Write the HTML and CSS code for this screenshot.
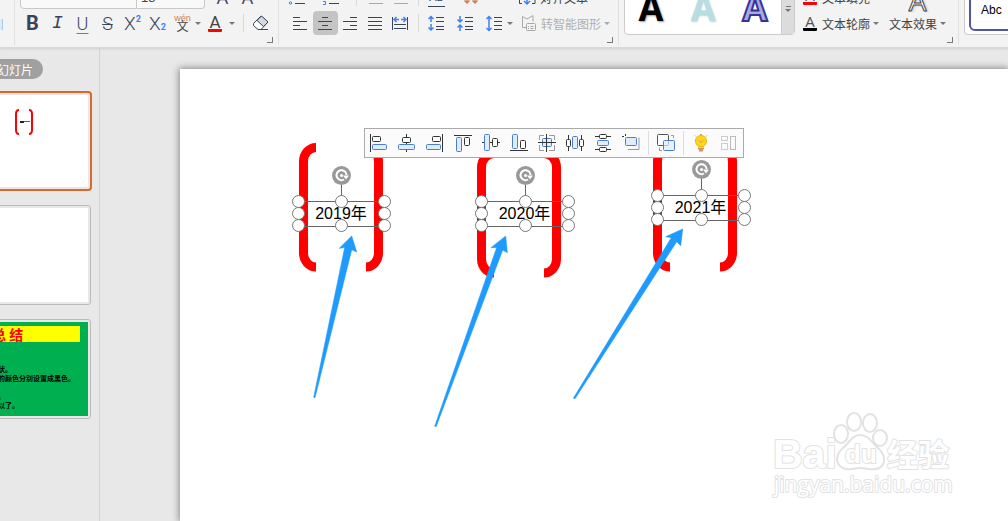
FILE: index.html
```
<!DOCTYPE html>
<html lang="zh-CN">
<head>
    <meta charset="UTF-8">
    <meta name="viewport" content="width=device-width, initial-scale=1.0">
    <title>演示文稿</title>
    <link rel="stylesheet" href="styles.css">
</head>
<body>
    <header class="ribbon">
        <div class="group clip-group"><span class="clip-edge"></span></div>

        <!-- Font -->
        <div class="group font-group">
            <div class="row">
                <select class="font-name" aria-label="字体"><option></option></select>
                <select class="font-size" aria-label="字号"><option>18</option></select>
                <button class="tool grow" aria-label="增大字号">A</button>
                <button class="tool grow" aria-label="减小字号">A</button>
            </div>
            <div class="row">
                <button class="tool bold">B</button>
                <button class="tool italic">I</button>
                <button class="tool underline">U</button>
                <button class="tool strike">S</button>
                <button class="tool script">X<sup>2</sup></button>
                <button class="tool script">X<sub>2</sub></button>
                <button class="tool pinyin"><span class="wen">wén</span><span class="zi">文</span></button>
                <button class="caret" aria-label="拼音选项"></button>
                <button class="tool color">A</button>
                <button class="caret" aria-label="字体颜色"></button>
                <span class="sep wide"></span>
                <button class="tool" aria-label="清除格式">
                    <svg width="20" height="20" fill="none" stroke="#39435c"><path d="M1.500 10.500 9 3l7 6-7 7.500H6L1.500 12.500z" fill="#fff"/><path d="M5 7.500 9.500 3l6.500 6-4.500 4.500z" fill="#d5d9e2"/><path d="M6 16.500h10"/></svg>
                </button>
            </div>
            <button class="launcher" aria-label="字体设置"></button>
        </div>

        <!-- Paragraph -->
        <div class="group para-group">
            <div class="row">
                <button class="tool list" aria-label="项目符号">
                    <svg width="20" height="20" fill="none" stroke="#39435c"><path d="M7 4.500h10M7 10.500h10M7 16.500h10"/><g stroke="#4080f0"><circle cx="2.500" cy="10" r="1.200"/><circle cx="2.500" cy="16" r="1.200"/></g></svg>
                </button>
                <button class="tool list" aria-label="编号">
                    <svg width="20" height="20" fill="none" stroke="#39435c"><path d="M7 4.500h10M7 10.500h10M7 16.500h10"/><path d="M1 14.500h2.500v3H1" stroke="#4080f0"/></svg>
                </button>
                <span class="sep"></span>
                <button class="tool" aria-label="减少缩进">
                    <svg width="20" height="20" stroke="#aaa"><path d="M3 4.500h14M3 10.500h14M3 16.500h14"/></svg>
                </button>
                <button class="tool" aria-label="增加缩进">
                    <svg width="20" height="20" stroke="#aaa"><path d="M3 4.500h14M3 10.500h14M3 16.500h14"/></svg>
                </button>
                <span class="sep mid"></span>
                <button class="tool ab">AB</button>
                <button class="tool direction" aria-label="文字方向">
                    <svg width="20" height="20" fill="none" stroke="#d08050" stroke-width="1.500"><path d="M6 2v14M3.500 13.500 6 16l2.500-2.500M14 2v14M11.500 13.500 14 16l2.500-2.500"/></svg>
                </button>
                <button class="text-tool align-text">
                    <svg width="20" height="20" fill="none" stroke="#39435c"><path d="M5 3.500H2.500v13H5M15 3.500h3v13H15"/><path d="M10 4v13M7 14l3 3 3-3" stroke="#4080f0" stroke-width="1.500"/></svg>
                    对齐文本
                </button>
            </div>
            <div class="row">
                <button class="tool" aria-label="左对齐">
                    <svg width="20" height="20" stroke="#39435c"><path d="M2 4.500h7M2 8.500h14M2 12.500h7M2 16.500h14"/></svg>
                </button>
                <button class="tool active" aria-label="居中">
                    <svg width="20" height="20" stroke="#39435c"><path d="M6 4.500h6M2 8.500h14M6 12.500h6M2 16.500h14"/></svg>
                </button>
                <button class="tool" aria-label="右对齐">
                    <svg width="20" height="20" stroke="#39435c"><path d="M9 4.500h7M2 8.500h14M9 12.500h7M2 16.500h14"/></svg>
                </button>
                <button class="tool" aria-label="两端对齐">
                    <svg width="20" height="20" stroke="#39435c"><path d="M2 4.500h14M2 8.500h14M2 12.500h14M2 16.500h14"/></svg>
                </button>
                <button class="tool" aria-label="分散对齐">
                    <svg width="20" height="20" fill="none" stroke="#39435c"><path d="M1.500 4v13M16.500 4v13M3 11.500h12M3 15.500h12"/><path d="M3 6.500h5M10 6.500h5M5.500 4 3 6.500 5.500 9M12.500 4 15 6.500 12.500 9" stroke="#4080f0" stroke-width="1.500"/></svg>
                </button>
                <span class="sep mid"></span>
                <div class="spacing">
                    <button class="tool" aria-label="增大段距">
                        <svg width="20" height="20" fill="none" stroke="#39435c"><path d="M9 4.500h8M9 8.500h8M9 13.500h8M9 16.500h8"/><path d="M4 9V3M1.500 6 4 3.500 6.500 6M4 11v6M1.500 14.500 4 17l2.500-2.500" stroke="#4080f0" stroke-width="1.500"/></svg>
                    </button>
                    <button class="tool" aria-label="减小段距">
                        <svg width="20" height="20" fill="none" stroke="#39435c"><path d="M9 4.500h8M9 8.500h8M9 13.500h8M9 16.500h8"/><path d="M4 3v6M1.500 6.500 4 9l2.500-2.500M4 18v-6M1.500 14.500 4 12l2.500 2.500" stroke="#4080f0" stroke-width="1.500"/></svg>
                    </button>
                    <button class="tool" aria-label="行距">
                        <svg width="20" height="20" fill="none" stroke="#39435c"><path d="M9 4.500h8M9 8.500h8M9 12.500h8M9 16.500h8"/><path d="M4 4v13M1.500 6 4 3.500 6.500 6M1.500 15 4 17.500 6.500 15" stroke="#4080f0" stroke-width="1.500"/></svg>
                    </button>
                </div>
                <button class="caret" aria-label="行距选项"></button>
                <button class="text-tool smart" disabled>
                    <svg width="20" height="20" fill="none" stroke="#a8a8a8"><path d="M7 14.500H3.500v-11L8 6l6-3.500v6"/><rect x="7.500" y="10.500" width="9" height="7" rx="1" fill="#f3f3f3"/><path d="M9 13.500h1M11.500 13.500h3M9 15.500h1M11.500 15.500h3"/></svg>
                    转智能图形<span class="arrow"></span>
                </button>
            </div>
            <button class="launcher" aria-label="段落设置"></button>
        </div>

        <!-- WordArt -->
        <div class="group art-group">
            <div class="gallery">
                <button class="art art-black">A</button>
                <button class="art art-teal">A</button>
                <button class="art art-blue">A</button>
                <button class="more" aria-label="更多样式"><span class="line"></span><span class="arrow"></span></button>
            </div>
            <div class="stack">
                <button class="text-tool"><span class="glyph fill-red">A</span>文本填充</button>
                <button class="text-tool"><span class="glyph">A</span>文本轮廓<span class="arrow"></span></button>
            </div>
            <button class="effect">
                <span class="effect-glyph">A</span>
                <span class="effect-label">文本效果<span class="arrow"></span></span>
            </button>
            <button class="launcher" aria-label="文本设置"></button>
        </div>

        <div class="group style-group">
            <div class="style-gallery"><button class="shape-style">Abc</button></div>
        </div>
    </header>

    <main class="workspace">
        <aside class="sidebar">
            <button class="tag">幻灯片</button>
            <div class="thumb selected">
                <div class="page">
                    <svg class="mini" width="20" height="26" fill="none" stroke="#f00" stroke-width="2"><path d="M5 1Q2 1 2 5v16q0 4 3 4M15 1q3 0 3 4v16q0 4-3 4"/><path d="M6 13h4" stroke="#222"/><path d="M10 12.500h6" stroke="#468" stroke-width="1"/></svg>
                </div>
            </div>
            <div class="thumb"><div class="page"></div></div>
            <div class="thumb">
                <div class="page green">
                    <h2>总 结</h2>
                    <p>状。<br>的颜色分别设置成黑色。<br><br>。<br>以了。</p>
                </div>
            </div>
        </aside>

        <section class="canvas">
            <div class="slide">
                <svg class="brackets" width="828" height="452" fill="none" stroke="#f00" stroke-width="9">
                    <path d="M136 78.500A12.500 14 0 0 0 123.500 92.500V184A12.500 14 0 0 0 136 198M186 78.500A12.500 14 0 0 1 198.500 92.500V184A12.500 14 0 0 1 186 198"/>
                    <path d="M314 84.500A12.500 14 0 0 0 301.500 98.500V190A12.500 14 0 0 0 314 204M364 84.500A12.500 14 0 0 1 376.500 98.500V190A12.500 14 0 0 1 364 204"/>
                    <path d="M490 78.500A12.500 14 0 0 0 477.500 92.500V184A12.500 14 0 0 0 490 198M540 78.500A12.500 14 0 0 1 552.500 92.500V184A12.500 14 0 0 1 540 198"/>
                </svg>

                <div class="textbox box-2019">2019年<i class="rotate"><svg width="19" height="19" fill="none" stroke="#fff" stroke-width="2"><path d="M12 13.500A5 5 0 1 1 14.500 9"/><path d="M11 9.500h6l-3 4z" fill="#fff" stroke="none"/><circle cx="9.500" cy="9.500" r="1.500" fill="#fff" stroke="none"/></svg></i><i class="h nw"></i><i class="h n"></i><i class="h ne"></i><i class="h w"></i><i class="h e"></i><i class="h sw"></i><i class="h s"></i><i class="h se"></i></div>
                <div class="textbox box-2020">2020年<i class="rotate"><svg width="19" height="19" fill="none" stroke="#fff" stroke-width="2"><path d="M12 13.500A5 5 0 1 1 14.500 9"/><path d="M11 9.500h6l-3 4z" fill="#fff" stroke="none"/><circle cx="9.500" cy="9.500" r="1.500" fill="#fff" stroke="none"/></svg></i><i class="h nw"></i><i class="h n"></i><i class="h ne"></i><i class="h w"></i><i class="h e"></i><i class="h sw"></i><i class="h s"></i><i class="h se"></i></div>
                <div class="textbox box-2021">2021年<i class="rotate"><svg width="19" height="19" fill="none" stroke="#fff" stroke-width="2"><path d="M12 13.500A5 5 0 1 1 14.500 9"/><path d="M11 9.500h6l-3 4z" fill="#fff" stroke="none"/><circle cx="9.500" cy="9.500" r="1.500" fill="#fff" stroke="none"/></svg></i><i class="h nw"></i><i class="h n"></i><i class="h ne"></i><i class="h w"></i><i class="h e"></i><i class="h sw"></i><i class="h s"></i><i class="h se"></i></div>

                <svg class="arrows" width="828" height="452" viewBox="180 69 828 452" fill="#1e9bff" stroke="#1e9bff" stroke-width=".6">
                    <path d="M351.700 236 339.300 248.300 344.700 247.500 313.700 397.300 315 397.700 351.700 249.700 356.700 252z"/>
                    <path d="M505.700 236 491 247.700 496.700 247.500 434.700 426.300 436.200 426.500 502.700 250 507.300 252.700z"/>
                    <path d="M682.700 229 665.700 236.700 671.300 237.700 573.500 398 575 398.700 676.700 241.700 680.700 245.700z"/>
                </svg>

                <!-- Alignment toolbar -->
                <div class="floatbar">
                    <button aria-label="左对齐"><svg width="20" height="20"><path d="M1.500 1v18"/><rect x="3.500" y="3.500" width="8" height="5" rx="1"/><rect class="b" x="3.500" y="11.500" width="14" height="5" rx="1"/></svg></button>
                    <button aria-label="水平居中"><svg width="20" height="20"><path d="M9.500 1v18"/><rect class="w" x="5.500" y="4.500" width="8" height="5" rx="1"/><rect class="b" x="1.500" y="11.500" width="16" height="5" rx="1"/></svg></button>
                    <button aria-label="右对齐"><svg width="20" height="20"><path d="M17.500 1v18"/><rect x="7.500" y="3.500" width="8" height="5" rx="1"/><rect class="b" x="1.500" y="11.500" width="14" height="5" rx="1"/></svg></button>
                    <button aria-label="靠上对齐"><svg width="20" height="20"><path d="M1 2.500h18"/><rect class="b" x="3.500" y="4.500" width="5" height="14" rx="1"/><rect x="11.500" y="4.500" width="5" height="8" rx="1"/></svg></button>
                    <button aria-label="垂直居中"><svg width="20" height="20"><path d="M1 9.500h18"/><rect class="b" x="3.500" y="1.500" width="5" height="16" rx="1"/><rect class="w" x="11.500" y="5.500" width="5" height="8" rx="1"/></svg></button>
                    <button aria-label="靠下对齐"><svg width="20" height="20"><path d="M1 17.500h18"/><rect class="b" x="3.500" y="1.500" width="5" height="14" rx="1"/><rect x="11.500" y="7.500" width="5" height="8" rx="1"/></svg></button>
                    <button aria-label="中心对齐"><svg width="20" height="20"><path d="M2.500 7V2.500H7M12 2.500h5.500V7M2.500 12v5.500H7M12 17.500h5.500V12" stroke="#999"/><rect class="b" x="5.500" y="5.500" width="9" height="8" rx="1"/><path d="M1 9.500h18M9.500 1v18"/></svg></button>
                    <button aria-label="横向分布"><svg width="20" height="20"><path d="M3.500 2v16M16.500 2v16"/><rect class="w" x="1.500" y="6.500" width="4" height="7" rx="1"/><rect class="b" x="7.500" y="3.500" width="5" height="12" rx="1"/><rect class="w" x="14.500" y="6.500" width="4" height="7" rx="1"/></svg></button>
                    <button aria-label="纵向分布"><svg width="20" height="20"><path d="M2 3.500h16M2 16.500h16"/><rect class="w" x="6.500" y="1.500" width="7" height="4" rx="1"/><rect class="b" x="4.500" y="7.500" width="11" height="5" rx="1"/><rect class="w" x="6.500" y="14.500" width="7" height="4" rx="1"/></svg></button>
                    <button aria-label="相对对齐"><svg width="20" height="20"><path d="M4.500 1v2M1 3.500h2"/><path d="M18 4.500v12H7" stroke="#999"/><rect class="b" x="4.500" y="4.500" width="11" height="8" rx="1"/></svg></button>
                    <span class="bar-sep"></span>
                    <button aria-label="组合"><svg width="20" height="20"><rect x="1.500" y="1.500" width="11" height="11" rx="1" stroke="#555"/><rect class="b" x="7.500" y="7.500" width="11" height="10" rx="1" fill-opacity=".7"/><path d="M15 2.500h2.500V5M3.500 14.500v3H6" stroke="#999"/></svg></button>
                    <span class="bar-sep"></span>
                    <button aria-label="智能建议"><svg width="20" height="20"><path d="M7.500 13.500Q4.500 11.500 4.500 8a5.500 5.500 0 0 1 11 0q0 3.500-3 5.500z" fill="#ffd71c" stroke="#eab400"/><path d="M7 15.500h6M8 17.500h4" stroke="#d79560" stroke-width="2"/><path d="M7.500 7.500 10 9.500l2.500-2" stroke="#d79560"/><path d="M9 1.500h2M4 2.500l1 1M16 2.500l-1 1" stroke="#d79560"/></svg></button>
                    <button aria-label="更多布局" disabled><svg width="20" height="20"><g stroke="#ccc"><rect x="2.500" y="3.500" width="6" height="4"/><rect x="2.500" y="10.500" width="6" height="6"/><rect x="11.500" y="3.500" width="5" height="13" stroke="#bbb"/></g></svg></button>
                </div>

                <svg class="watermark" width="190" height="96" fill="#fff" stroke="#e2e2e2" stroke-width="2" stroke-linejoin="round">
                    <text class="wm-bai" x="5" y="60">Bai</text>
                    <ellipse cx="73" cy="26" rx="7" ry="9"/><ellipse cx="86" cy="14" rx="7" ry="9"/><ellipse cx="102" cy="15" rx="7" ry="9"/><ellipse cx="112" cy="30" rx="7" ry="8"/>
                    <path d="M92 27c9 0 12 8 18 13s8 13 4 18c-6 6-14 2-22 2s-14 4-20-2c-5-5-3-13 3-18s9-13 17-13z"/>
                    <text class="wm-du" x="77" y="55">du</text>
                    <text class="wm-cjk" x="119" y="58">经验</text>
                    <text class="wm-url" x="6" y="84">jingyan.baidu.com</text>
                </svg>
            </div>
        </section>
    </main>
</body>
</html>
```
FILE: styles.css
```
* {
    box-sizing: border-box;
}
body {
    margin: 0;
    height: 100vh;
    display: flex;
    flex-direction: column;
    overflow: hidden;
    background-color: #e8e8e8;
    color: #444;
    font-family: "Liberation Sans", "Noto Sans CJK SC", sans-serif;
    font-size: 12px;
}
button, select {
    margin: 0;
    padding: 0;
    border: 0;
    background: none;
    color: inherit;
    font: inherit;
}
svg {
    flex: none;
}

/* Ribbon */
.ribbon {
    flex: none;
    display: flex;
    height: 48px;
    overflow: hidden;
    background-color: #f3f3f3;
    border-bottom: 1px solid #d8d8d8;
    box-shadow: 0 1px 2px #d0d0d0;
}
.group {
    position: relative;
    flex: none;
    display: flex;
    flex-direction: column;
    justify-content: flex-end;
    gap: 2px;
    margin-bottom: 2px;
    padding: 0 0 10px 5px;
    border-right: 1px solid #e0e0e0;
}
.clip-group {
    width: 15px;
    padding-left: 0;
}
.clip-edge {
    width: 3px;
    height: 11px;
    margin-bottom: 5px;
    background-color: #dcebf8;
    border-right: 1px solid #a9cbea;
}
.font-group {
    width: 264px;
}
.para-group {
    width: 340px;
    padding-left: 9px;
}
.art-group {
    width: 340px;
    flex-direction: row;
    justify-content: flex-start;
    align-items: flex-end;
    gap: 0;
}
.style-group {
    flex: 1;
    border: 0;
}
.row {
    flex: none;
    display: flex;
    align-items: center;
    height: 24px;
}
.tool {
    flex: none;
    display: flex;
    align-items: center;
    justify-content: center;
    width: 25px;
    height: 24px;
    color: #39435c;
    border-radius: 4px;
}
.tool.active {
    background-color: #c4c4c4;
}
.list {
    width: 34px;
    justify-content: flex-start;
}
.caret, .arrow {
    flex: none;
    display: inline-block;
    border: 3px solid transparent;
    border-top-color: #777;
    border-bottom: 0;
}
.sep {
    flex: none;
    width: 1px;
    height: 18px;
    margin-right: 6px;
    background-color: #d8d8d8;
}
.sep.mid {
    margin: 0 5px;
}
.sep.wide {
    margin: 0 5px 0 8px;
}
.spacing {
    display: flex;
    gap: 4px;
}
.launcher {
    position: absolute;
    right: 5px;
    bottom: 2px;
    width: 6px;
    height: 6px;
    border: solid #777;
    border-width: 0 1px 1px 0;
}
.font-name, .font-size {
    appearance: none;
    height: 24px;
    border: 1px solid #c8c8c8;
    background-color: #f9f9f9;
}
.font-name {
    width: 117px;
    border-radius: 4px 0 0 4px;
}
.font-size {
    width: 68px;
    margin-right: 5px;
    padding-left: 4px;
    border-left: 0;
    border-radius: 0 4px 4px 0;
    font-size: 13px;
}
.grow {
    font: 18px "Open Sans", sans-serif;
}
.bold {
    font: bold 20px Roboto, sans-serif;
}
.italic {
    font: italic 18px "Liberation Mono", monospace;
}
.underline, .strike {
    font: 300 18px Roboto, sans-serif;
}
.underline {
    text-decoration: underline #4080f0 1px;
    text-underline-offset: 3px;
}
.strike {
    text-decoration: line-through 1px;
}
.script {
    font: 300 19px Roboto, sans-serif;
}
.script sup, .script sub {
    color: #4080f0;
    font-size: 9px;
    font-weight: bold;
    line-height: 1;
}
.script sup {
    margin-bottom: 8px;
}
.script sub {
    margin-top: 8px;
}
.pinyin {
    flex-direction: column;
    color: #444;
}
.wen {
    color: #d08050;
    font-size: 9px;
    line-height: 7px;
}
.zi {
    font-size: 12px;
    line-height: 10px;
}
.color {
    width: 14px;
    height: 18px;
    margin: 0 7px;
    border-bottom: 3px solid #f00;
    border-radius: 1px;
    color: #444;
    font: 17px/14px Roboto, sans-serif;
}
.ab {
    width: 17px;
    height: 20px;
    margin: 0 9px 0 4px;
    border-bottom: 1px solid #39435c;
    border-radius: 0;
    font-size: 11px;
}
.direction {
    margin-left: 4px;
}
.text-tool {
    display: flex;
    align-items: center;
    height: 24px;
    white-space: nowrap;
}
.text-tool .arrow, .effect .arrow {
    margin-left: 3px;
}
.align-text {
    margin-left: 34px;
    gap: 3px;
}
.smart {
    margin-left: 6px;
    gap: 2px;
    color: #b0b0b0;
}
.smart .arrow {
    margin-left: 1px;
    border-top-color: #aaa;
}

/* WordArt */
.gallery {
    display: flex;
    align-items: stretch;
    width: 171px;
    height: 56px;
    margin-right: 8px;
    background-color: #fff;
    border: 1px solid #ccc;
    border-radius: 4px;
}
.art {
    flex: 1;
    padding-top: 2px;
    font: bold 36px/46px "Open Sans", sans-serif;
}
.art-black {
    color: #000;
    text-shadow: 1px 1px 2px #999;
}
.art-teal {
    color: #b5dfe2;
    text-shadow: 1px 1px 2px #ccc;
}
.art-blue {
    color: #a9a9e0;
    -webkit-text-stroke: 2px #33339a;
}
.more {
    display: flex;
    flex-direction: column;
    align-items: center;
    justify-content: center;
    gap: 2px;
    width: 13px;
    padding-top: 4px;
    background-color: #dcdcdc;
    border-left: 1px solid #ccc;
}
.line {
    width: 5px;
    height: 1px;
    background-color: #777;
}
.stack {
    display: flex;
    flex-direction: column;
    gap: 2px;
    margin-right: 10px;
}
.glyph {
    width: 14px;
    height: 15px;
    margin-right: 5px;
    border-bottom: 3px solid #000;
    border-radius: 1px;
    color: #555;
    font: 15px/11px "Open Sans", sans-serif;
}
.fill-red {
    border-color: #f00;
}
.effect {
    display: flex;
    flex-direction: column;
    align-items: center;
    white-space: nowrap;
}
.effect-glyph {
    color: #fff;
    -webkit-text-stroke: 1px #444;
    text-shadow: 2px 1px 2px #ccc;
    font: 28px/22px "Open Sans", sans-serif;
}
.effect-label {
    display: flex;
    align-items: center;
    height: 24px;
}
.style-gallery {
    height: 56px;
    padding: 0 0 4px 4px;
    background-color: #fff;
    border: 1px solid #ccc;
    border-right: 0;
    border-radius: 4px 0 0 4px;
}
.shape-style {
    width: 60px;
    height: 51px;
    padding: 9px 0 0 10px;
    background-color: #fff;
    border: 2px solid #5056a0;
    border-radius: 6px;
    color: #000;
    text-align: left;
}

/* Slide list */
.workspace {
    flex: 1;
    display: flex;
    min-height: 0;
}
.sidebar {
    flex: none;
    display: flex;
    flex-direction: column;
    align-items: flex-start;
    gap: 14px;
    width: 100px;
    padding-top: 11px;
    overflow: hidden;
    border-right: 1px solid #d2d2d2;
}
.tag {
    height: 20px;
    margin: 0 0 -2px -20px;
    padding: 0 10px 0 17px;
    background-color: #a0a0a0;
    border-radius: 10px;
    color: #fff;
}
.thumb {
    flex: none;
    width: 166px;
    height: 100px;
    margin-left: -75px;
    padding: 2px;
    border: 1px solid #bbb;
    border-radius: 3px;
}
.thumb.selected {
    width: 167px;
    border: 2px solid #d9692a;
    border-radius: 4px;
}
.page {
    height: 100%;
    overflow: hidden;
    background-color: #fff;
}
.mini {
    display: block;
    margin: 14px 0 0 85px;
}
.green {
    padding: 4px 8px 0 0;
    background-color: #00b050;
}
.green h2 {
    margin: 0 0 23px;
    padding-left: 64px;
    background-color: #ff0;
    color: #f00;
    font: bold 14px/16px "Noto Sans CJK SC", sans-serif;
}
.green p {
    margin: 0;
    padding-left: 70px;
    color: #000;
    font: bold 7px/9px "Noto Sans CJK SC", sans-serif;
    white-space: nowrap;
}

/* Slide */
.canvas {
    flex: 1;
    display: flex;
    min-width: 0;
    padding: 21px 0 0 80px;
    overflow: hidden;
}
.slide {
    position: relative;
    flex: 1;
    background-color: #fff;
    box-shadow: 0 0 7px 1px #888;
}
.brackets, .arrows {
    position: absolute;
    top: 0;
    left: 0;
}
.textbox {
    position: absolute;
    width: 89px;
    height: 26px;
    padding-right: 2px;
    border: 1px solid #666;
    color: #000;
    font-size: 16px;
    line-height: 24px;
    text-align: center;
}
.box-2019 {
    left: 118px;
    top: 132px;
    width: 88px;
}
.box-2020 {
    left: 301px;
    top: 132px;
}
.box-2021 {
    left: 477px;
    top: 126px;
}
.h {
    position: absolute;
    width: 13px;
    height: 13px;
    margin: -7px;
    background-color: #fff;
    border: 1px solid #777;
    border-radius: 50%;
}
.nw, .n, .ne {
    top: 0;
}
.w, .e {
    top: 50%;
}
.sw, .s, .se {
    top: 100%;
}
.nw, .w, .sw {
    left: 0;
}
.n, .s {
    left: 50%;
}
.ne, .e, .se {
    left: 100%;
}
.rotate {
    position: absolute;
    left: 50%;
    top: -36px;
    width: 19px;
    height: 19px;
    margin-left: -10px;
    background-color: #999;
    border-radius: 50%;
}
.rotate svg {
    display: block;
}
.rotate::after {
    content: "";
    position: absolute;
    left: 9px;
    top: 19px;
    height: 12px;
    border-left: 1px solid #666;
}
.floatbar {
    position: absolute;
    left: 184px;
    top: 59px;
    display: flex;
    align-items: center;
    height: 30px;
    background-color: #fbfbfb;
    border: 1px solid #aaa;
}
.floatbar button {
    display: flex;
    align-items: center;
    justify-content: center;
    width: 28px;
    height: 28px;
}
.floatbar svg {
    fill: none;
    stroke: #333;
}
.floatbar .b {
    fill: #e0ebfb;
    stroke: #4a7fd0;
}
.floatbar .w {
    fill: #fbfbfb;
}
.bar-sep {
    width: 1px;
    height: 24px;
    margin: 0 3px;
    background-color: #ddd;
}
.watermark {
    position: absolute;
    right: 50px;
    bottom: 17px;
}
.watermark text {
    paint-order: stroke;
}
.wm-bai {
    font: bold 41px "Liberation Sans", sans-serif;
}
.wm-du {
    font: bold 26px "Liberation Sans", sans-serif;
}
.wm-cjk {
    font: bold 31px "Noto Sans CJK SC", sans-serif;
}
.wm-url {
    font: 21px "Open Sans", sans-serif;
}
```
